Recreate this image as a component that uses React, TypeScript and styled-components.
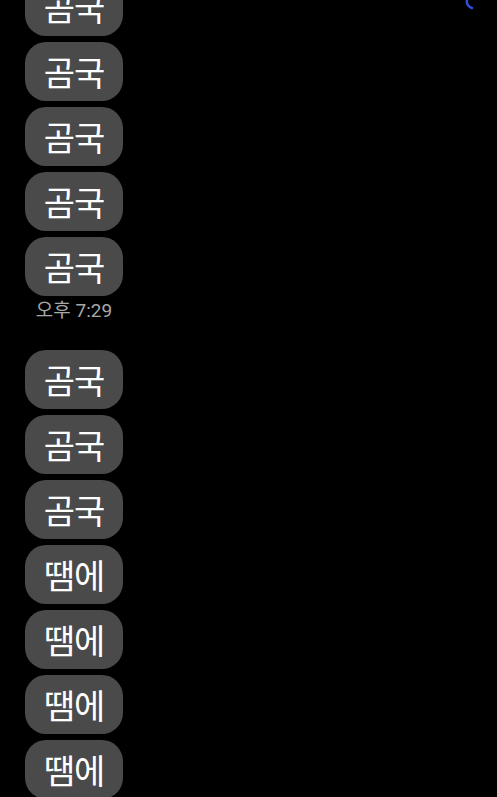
import React from 'react'
import styled, { createGlobalStyle } from 'styled-components'

const GlobalStyle = createGlobalStyle`
  html, body {
    margin: 0;
    padding: 0;
    background: #000000;
    overflow: hidden;
  }
  body {
    font-family: "Noto Sans CJK KR", "Noto Sans", sans-serif;
  }
`;

const Screen = styled.div`
  position: relative;
  width: 497px;
  height: 797px;
  background: #000000;
  overflow: hidden;
`;

const ChatList = styled.div`
  display: flex;
  flex-direction: column;
  align-items: flex-start;
  padding-left: 25px;
  margin-top: -23px;
`;

const Group = styled.div`
  display: flex;
  flex-direction: column;
  align-items: center;
  gap: 6px;
  margin-bottom: 28px;
`;

const Bubble = styled.div`
  width: 98px;
  height: 59px;
  box-sizing: border-box;
  border-radius: 21px;
  background: #4a4a4a;
  color: #ffffff;
  font-size: 34px;
  line-height: 60px;
  text-align: center;
  letter-spacing: -1px;
`;

const Time = styled.div`
  margin-top: -2px;
  color: #a8a8a8;
  font-family: Roboto, "Noto Sans CJK KR", sans-serif;
  font-size: 19px;
  line-height: 22px;
  white-space: nowrap;
`;

const Mark = styled.svg`
  position: absolute;
  top: 0;
  left: 463px;
`;

export default function App() {
    const groups = [
        { texts: ['곰국', '곰국', '곰국', '곰국', '곰국'], time: '오후 7:29' },
        { texts: ['곰국', '곰국', '곰국', '땜에', '땜에', '땜에', '땜에'], time: '' },
    ];
    return (
        <Screen>
            <GlobalStyle />
            <Mark width="12" height="10" viewBox="0 0 12 10">
                <path d="M4 0 Q3 6 9 8" stroke="#2f4fe0" strokeWidth="2.4" fill="none" strokeLinecap="round" />
            </Mark>
            <ChatList>
                {groups.map((g, gi) => (
                    <Group key={gi}>
                        {g.texts.map((t, i) => (
                            <Bubble key={`${t}_${i}`}>{t}</Bubble>
                        ))}
                        {g.time && <Time>{g.time}</Time>}
                    </Group>
                ))}
            </ChatList>
        </Screen>
    );
}
